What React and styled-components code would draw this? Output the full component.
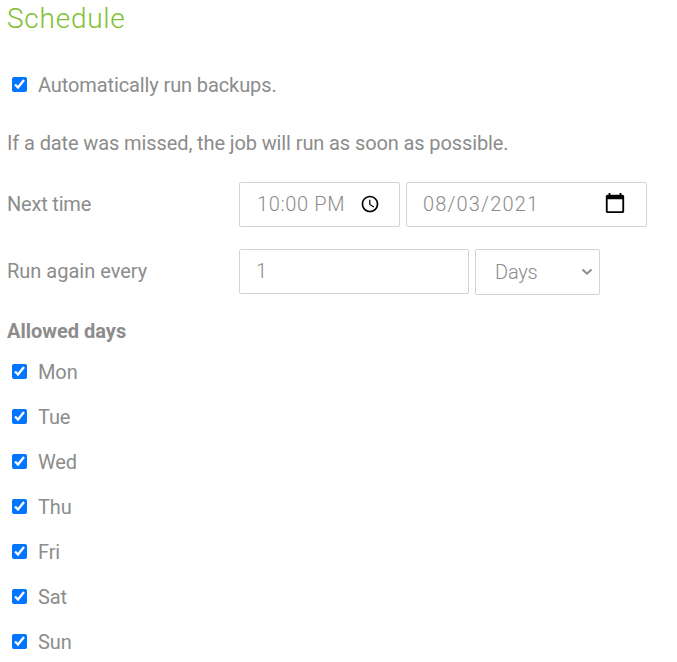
import React, { useState } from "react";
import styled, { createGlobalStyle } from "styled-components";

const DAYS = ["Mon", "Tue", "Wed", "Thu", "Fri", "Sat", "Sun"];

function CheckOption({ label }) {
  const [checked, setChecked] = useState(true);
  return (
    <OptionRow>
      <Checkbox
        type="checkbox"
        checked={checked}
        onChange={() => setChecked(!checked)}
      />
      <OptionText>{label}</OptionText>
    </OptionRow>
  );
}

function App() {
  return (
    <Page>
      <GlobalStyle />
      <Title>Schedule</Title>
      <CheckOption label="Automatically run backups." />
      <Hint>If a date was missed, the job will run as soon as possible.</Hint>
      <FieldRow>
        <FieldLabel $spacing="-0.2px">Next time</FieldLabel>
        <Field $width={161} $indent={17}>
          <FieldValue $spacing="0.65px">10:00 PM</FieldValue>
          <ClockIcon viewBox="0 0 24 24">
            <path d="M11.99 2C6.47 2 2 6.48 2 12s4.47 10 9.99 10C17.52 22 22 17.52 22 12S17.52 2 11.99 2zM12 20c-4.42 0-8-3.58-8-8s3.58-8 8-8 8 3.58 8 8-3.58 8-8 8zm.5-13H11v6l5.25 3.15.75-1.23-4.5-2.67z" />
          </ClockIcon>
        </Field>
        <Field $width={241}>
          <FieldValue $spacing="1.15px">08/03/2021</FieldValue>
          <CalendarIcon viewBox="0 0 24 24">
            <path d="M20 3h-1V1h-2v2H7V1H5v2H4c-1.1 0-2 .9-2 2v16c0 1.1.9 2 2 2h16c1.1 0 2-.9 2-2V5c0-1.1-.9-2-2-2zm0 18H4V8h16v13z" />
          </CalendarIcon>
        </Field>
      </FieldRow>
      <FieldRow>
        <FieldLabel>Run again every</FieldLabel>
        <Field $width={230}>
          <FieldValue>1</FieldValue>
        </Field>
        <UnitSelect $width={125}>
          <FieldValue $spacing="-0.2px">Days</FieldValue>
          <Chevron viewBox="0 0 12 8">
            <path d="M1.5 1.5 6 5.7l4.5-4.2" />
          </Chevron>
        </UnitSelect>
      </FieldRow>
      <Subtitle>Allowed days</Subtitle>
      {DAYS.map((day) => (
        <CheckOption key={day} label={day} />
      ))}
    </Page>
  );
}

const GlobalStyle = createGlobalStyle`
  body {
    margin: 0;
    background: #fff;
    overflow: hidden;
  }
`;

const Page = styled.div`
  width: 677px;
  height: 662px;
  box-sizing: border-box;
  padding-left: 7px;
  overflow: hidden;
  color: #8c8c8c;
  font-family: "Roboto", sans-serif;
  font-size: 20px;
  letter-spacing: -0.11px;
`;

const Title = styled.h2`
  margin: 0 0 25px;
  color: #7fc031;
  font-size: 28px;
  line-height: 37px;
  font-weight: 350;
  letter-spacing: 0.75px;
`;

const OptionRow = styled.label`
  display: flex;
  align-items: center;
  height: 45px;
`;

const Checkbox = styled.input`
  width: 15px;
  height: 15px;
  margin: 0 11px 0 5px;
`;

const OptionText = styled.span`
  line-height: 24px;
`;

const Hint = styled.p`
  margin: 24px 0 27px;
  line-height: 24px;
`;

const FieldRow = styled.div`
  display: flex;
  align-items: flex-start;
  gap: 6px;
  margin-bottom: 22px;
`;

const FieldLabel = styled.div`
  width: 226px;
  line-height: 45px;
  letter-spacing: ${(props) => props.$spacing || "0"};
`;

const Field = styled.div`
  display: flex;
  align-items: center;
  justify-content: space-between;
  box-sizing: border-box;
  width: ${(props) => props.$width}px;
  height: 45px;
  padding: 0 19px 2px ${(props) => props.$indent || 16}px;
  border: 1px solid #d3d3d3;
  border-radius: 2px;
`;

const UnitSelect = styled(Field)`
  height: 46px;
  padding: 0 6px 0 19px;
`;

const FieldValue = styled.span`
  font-weight: 300;
  letter-spacing: ${(props) => props.$spacing || "0"};
`;

const ClockIcon = styled.svg`
  width: 20px;
  height: 20px;
  fill: #000;
`;

const CalendarIcon = styled.svg`
  width: 22px;
  height: 22px;
  margin: 0 1px 2px 0;
  fill: #000;
`;

const Chevron = styled.svg`
  width: 12px;
  height: 8px;
  fill: none;
  stroke: #8c8c8c;
  stroke-width: 2;
`;

const Subtitle = styled.h3`
  margin: 24px 0 6px;
  font-size: 20px;
  line-height: 24px;
  font-weight: 700;
  letter-spacing: 0;
`;

export default App;
